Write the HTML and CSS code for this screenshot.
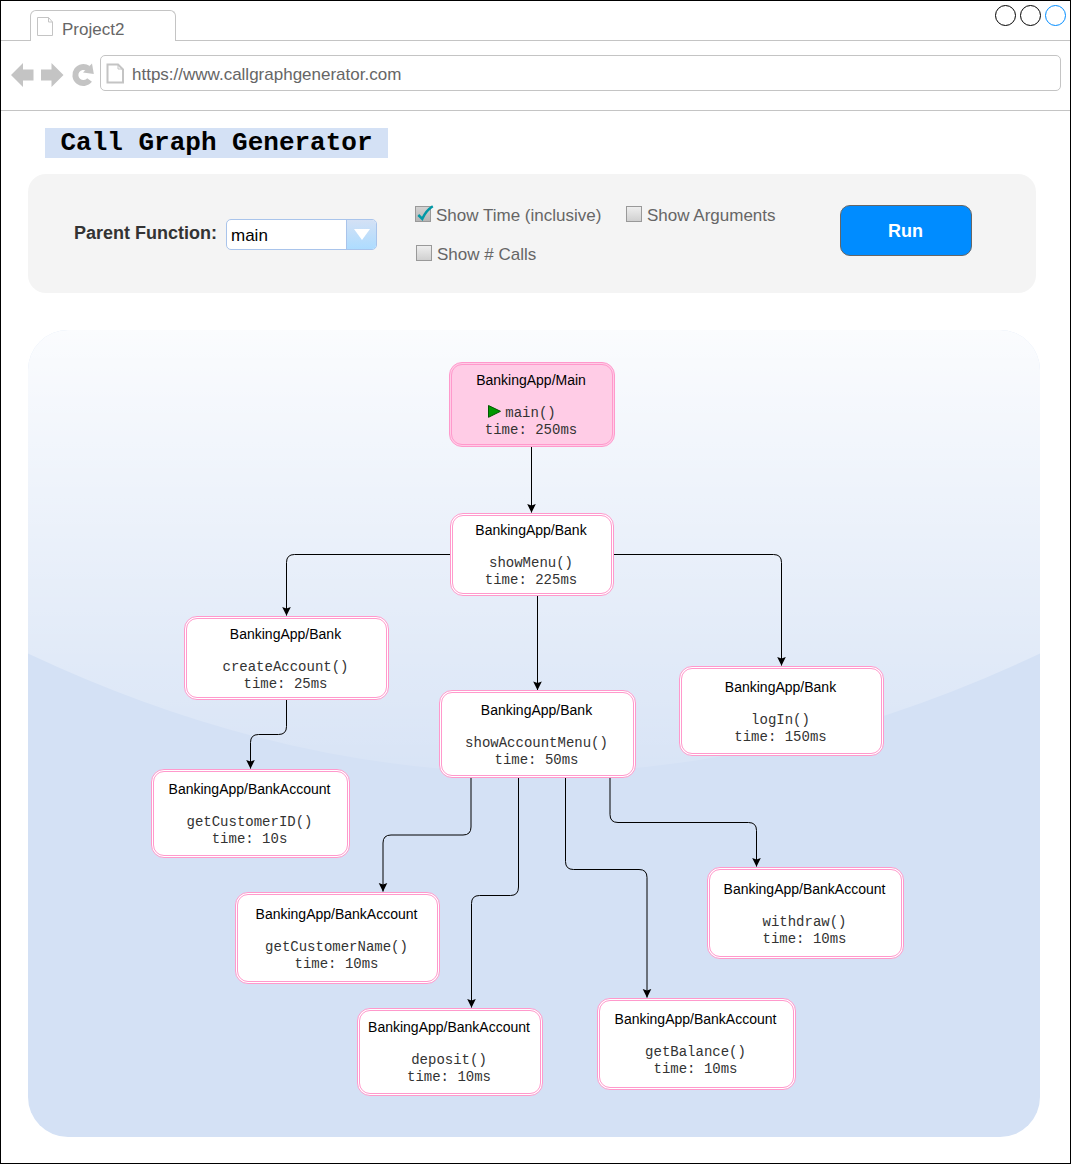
FILE: index.html
```html
<!DOCTYPE html>
<html lang="en">
<head>
<meta charset="utf-8">
<title>Call Graph Generator</title>
<link rel="stylesheet" href="styles.css">
</head>
<body>
<div class="window">
  <header class="tabstrip">
    <div class="tab">
      <svg class="tab-icon" width="16" height="19" viewBox="0 0 16 19"><path d="M.5 .5H11.5L15.5 5V18.5H.5ZM11.5 .5V5H15.5"/></svg>
      <span>Project2</span>
    </div>
    <div class="window-buttons">
      <svg width="71" height="22" viewBox="0 0 71 22"><circle cx="10.5" cy="10.5" r="10"/><circle cx="35.5" cy="10.5" r="10"/><circle class="active" cx="60.5" cy="10.5" r="10"/></svg>
    </div>
  </header>
  <nav class="toolbar">
    <svg class="nav-icons" width="84" height="26" viewBox="0 0 84 26">
      <path d="M0 13 12 1V7.5H22.5V18.500H12V25Z"/>
      <path d="M52.500 13 40.500 1V7.500H30V18.500H40.500V25Z"/>
      <path class="reload" d="M78.600 18A8 8 0 1 1 77 6.500"/>
      <path d="M81 1.500 82.800 12 72 10.500Z"/>
    </svg>
    <div class="address">
      <svg class="page-icon" width="19" height="21" viewBox="0 0 19 21"><path d="M1.500 1.500H12L17 6.500V19.500H1.500Z"/><path class="fold" d="M12 1.500V6H17"/></svg>
      <span>https://www.callgraphgenerator.com</span>
    </div>
  </nav>
  <main class="page">
    <h1 class="title">Call Graph Generator</h1>
    <section class="controls">
      <label class="parent-label">Parent Function:</label>
      <div class="select">
        <span class="select-value">main</span>
        <span class="select-arrow"><svg width="16" height="11" viewBox="0 0 16 11"><path d="M0 0H16L8 11Z"/></svg></span>
      </div>
      <div class="options">
        <div class="option-row">
          <div class="option first"><span class="box checked"><svg width="19" height="18" viewBox="0 0 19 18"><path d="M3.300 10 7.300 13.800C9.500 9 12.500 4.500 17.800 1.300"/></svg></span>Show Time (inclusive)</div>
          <div class="option"><span class="box"></span>Show Arguments</div>
        </div>
        <div class="option-row second">
          <div class="option"><span class="box"></span>Show # Calls</div>
        </div>
      </div>
      <button class="run">Run</button>
    </section>
    <section class="graph">
      <svg class="edges" width="1012" height="807" viewBox="28 330 1012 807">
        <defs>
          <linearGradient id="glass" x1="0" y1="0" x2="0" y2="1"><stop offset="0" stop-color="#fff" stop-opacity=".9"/><stop offset="1" stop-color="#fff" stop-opacity=".1"/></linearGradient>
          <marker id="arrow" markerUnits="userSpaceOnUse" markerWidth="12" markerHeight="12" refX="6" refY="10"><path d="M6 10.300 1.700 1.500 6 3 10.300 1.500Z"/></marker>
        </defs>
        <path class="glass" d="M28 330H1040V653.500Q534 892 28 653.500Z"/>
        <g class="wires">
          <path d="M531.500 447V512.500"/>
          <path d="M451 554.500H294.500Q286.500 554.500 286.500 562.500V615.500"/>
          <path d="M613 554.500H773.500Q781.500 554.500 781.500 562.500V665.500"/>
          <path d="M537.500 596V690"/>
          <path d="M286.500 699V726.500Q286.500 734.500 278.500 734.500H258.500Q250.500 734.500 250.500 742.500V768.500"/>
          <path d="M471 777V827Q471 835 463 835H391Q383 835 383 843V891.500"/>
          <path d="M518.500 777V887Q518.500 895.500 510.500 895.500H479.500Q471.500 895.500 471.500 903.500V1007.500"/>
          <path d="M565.500 777V861.500Q565.500 869.500 573.500 869.500H639Q647 869.500 647 877.500V997.500"/>
          <path d="M610 777V814.500Q610 822.500 618 822.500H748.500Q756.500 822.500 756.500 830.500V866.500"/>
        </g>
      </svg>
      <div class="node n-main"><b>BankingApp/Main</b><code class="entry"><svg width="13" height="13" viewBox="0 0 13 13"><path d="M.5 .5 12.500 6.300.5 12.300Z"/></svg>main()</code><code>time: 250ms</code></div>
      <div class="node n-menu"><b>BankingApp/Bank</b><code>showMenu()</code><code>time: 225ms</code></div>
      <div class="node n-create"><b>BankingApp/Bank</b><code>createAccount()</code><code>time: 25ms</code></div>
      <div class="node n-id"><b>BankingApp/BankAccount</b><code>getCustomerID()</code><code>time: 10s</code></div>
      <div class="node n-account"><b>BankingApp/Bank</b><code>showAccountMenu()</code><code>time: 50ms</code></div>
      <div class="node n-login"><b>BankingApp/Bank</b><code>logIn()</code><code>time: 150ms</code></div>
      <div class="node n-name"><b>BankingApp/BankAccount</b><code>getCustomerName()</code><code>time: 10ms</code></div>
      <div class="node n-deposit"><b>BankingApp/BankAccount</b><code>deposit()</code><code>time: 10ms</code></div>
      <div class="node n-balance"><b>BankingApp/BankAccount</b><code>getBalance()</code><code>time: 10ms</code></div>
      <div class="node n-withdraw"><b>BankingApp/BankAccount</b><code>withdraw()</code><code>time: 10ms</code></div>
    </section>
  </main>
</div>
</body>
</html>
```
FILE: styles.css
```css
* { box-sizing: border-box; }
body { margin: 0; background: #fff; font-family: "Liberation Sans", Arial, sans-serif; font-size: 17px; color: #666; }
svg { display: block; flex: none; }
.window { width: 1071px; height: 1164px; border: 1px solid #000; background: #fff; }

.tabstrip { display: flex; justify-content: space-between; height: 40px; padding: 9px 4px 0 29px; border-bottom: 1px solid #c4c4c4; }
.tab { display: flex; width: 146px; height: 31px; padding: 6px 0 0 6px; gap: 9px; border: 1px solid #c4c4c4; border-bottom: 0; border-radius: 6px 6px 0 0; background: #fff; line-height: 26px; }
.tab-icon { fill: #fff; stroke: #c4c4c4; }
.window-buttons { margin-top: -5px; }
.window-buttons circle { fill: #fff; stroke: #000; }
.window-buttons .active { stroke: #008cff; }

.toolbar { display: flex; height: 70px; padding: 14px 9px 0 10px; gap: 5px; border-bottom: 1px solid #c4c4c4; }
.nav-icons { margin-top: 7px; fill: #c4c4c4; }
.nav-icons .reload { fill: none; stroke: #c4c4c4; stroke-width: 6; }
.address { display: flex; align-items: center; flex: 1; height: 36px; padding: 0 5px 0 5px; gap: 7px; border: 1px solid #c4c4c4; border-radius: 5px; }
.page-icon { fill: none; stroke: #c4c4c4; stroke-width: 2; }
.page-icon .fold { stroke-width: 1; }
.address span { line-height: 20px; margin-top: 4px; }

.page { padding: 17px 0 0 27px; }
.title { width: 343px; height: 30px; margin: 0 0 16px 17px; background: #d4e1f5; color: #000; font: bold 26px/30px "Liberation Mono", "Courier New", monospace; text-align: center; white-space: nowrap; }
.controls { display: flex; align-items: flex-start; width: 1008px; height: 119px; padding-left: 46px; margin-bottom: 37px; border-radius: 18px; background: #f4f4f4; }
.parent-label { width: 152px; margin-top: 49px; font-weight: bold; font-size: 18px; line-height: 20px; color: #333; white-space: nowrap; }
.select { display: flex; width: 151px; height: 31px; margin-top: 45px; border: 1px solid #a9c4eb; border-radius: 5px; background: #fff; color: #000; overflow: hidden; }
.select-value { flex: 1; padding: 1px 0 0 4px; line-height: 30px; }
.select-arrow { display: flex; width: 30px; align-items: center; justify-content: center; border-left: 1px solid #a9c4eb; background: linear-gradient(#d4e1f5, #addcff); }
.select-arrow path { fill: #fff; }
.options { width: 463px; padding: 32px 0 0 38px; }
.option-row { display: flex; height: 20px; }
.second { margin: 19px 0 0 1px; }
.option { display: flex; gap: 5px; line-height: 20px; white-space: nowrap; }
.first { width: 211px; }
.box { width: 16px; height: 16px; border: 1px solid #999; background: linear-gradient(#eee, #d0d0d0); }
.checked { background: linear-gradient(#d2d2d2, #b5b5b5); }
.checked svg { margin: -2px 0 0 -1px; fill: none; stroke: #0098a6; stroke-width: 2.5; }
.run { width: 132px; height: 51px; margin: 31px 0 0; border: 1px solid #666; border-radius: 10px; background: #008cff; color: #fff; font: bold 18px "Liberation Sans", Arial, sans-serif; padding: 1px 1px 0 0; }

.graph { position: relative; width: 1012px; height: 807px; border-radius: 40px; background: #d4e1f5; overflow: hidden; }
.glass { fill: url(#glass); }
.wires { fill: none; stroke: #000; stroke-width: 1; }
.wires path { marker-end: url(#arrow); }
#arrow path { fill: #000; stroke: none; }
.node { position: absolute; display: flex; flex-direction: column; align-items: center; padding-right: 2px; border: 3px double #f9c; border-radius: 13px; background: #fff; color: #000; white-space: nowrap; }
.node b { font-weight: normal; font-size: 14px; line-height: 16px; margin-bottom: 17px; }
.node code { font: 14px/17px "Liberation Mono", "Courier New", monospace; color: #333; }
.node .entry { display: flex; gap: 4px; padding-right: 18px; }
.entry path { fill: #009900; stroke: #005700; }
.n-main { left: 421px; top: 32px; width: 166px; height: 85px; padding-top: 7px; background: #ffcce6; }
.n-menu { left: 422px; top: 183px; width: 164px; height: 83px; padding-top: 6px; }
.n-create { left: 156px; top: 286px; width: 205px; height: 84px; padding-top: 7px; }
.n-id { left: 123px; top: 439px; width: 199px; height: 89px; padding-top: 9px; }
.n-account { left: 411px; top: 360px; width: 197px; height: 88px; padding-top: 9px; }
.n-login { left: 651px; top: 336px; width: 205px; height: 90px; padding-top: 10px; }
.n-name { left: 207px; top: 562px; width: 205px; height: 92px; padding-top: 11px; }
.n-deposit { left: 329px; top: 678px; width: 186px; height: 88px; padding-top: 8px; }
.n-balance { left: 569px; top: 668px; width: 199px; height: 92px; padding-top: 10px; }
.n-withdraw { left: 679px; top: 537px; width: 197px; height: 92px; padding-top: 11px; }
```
